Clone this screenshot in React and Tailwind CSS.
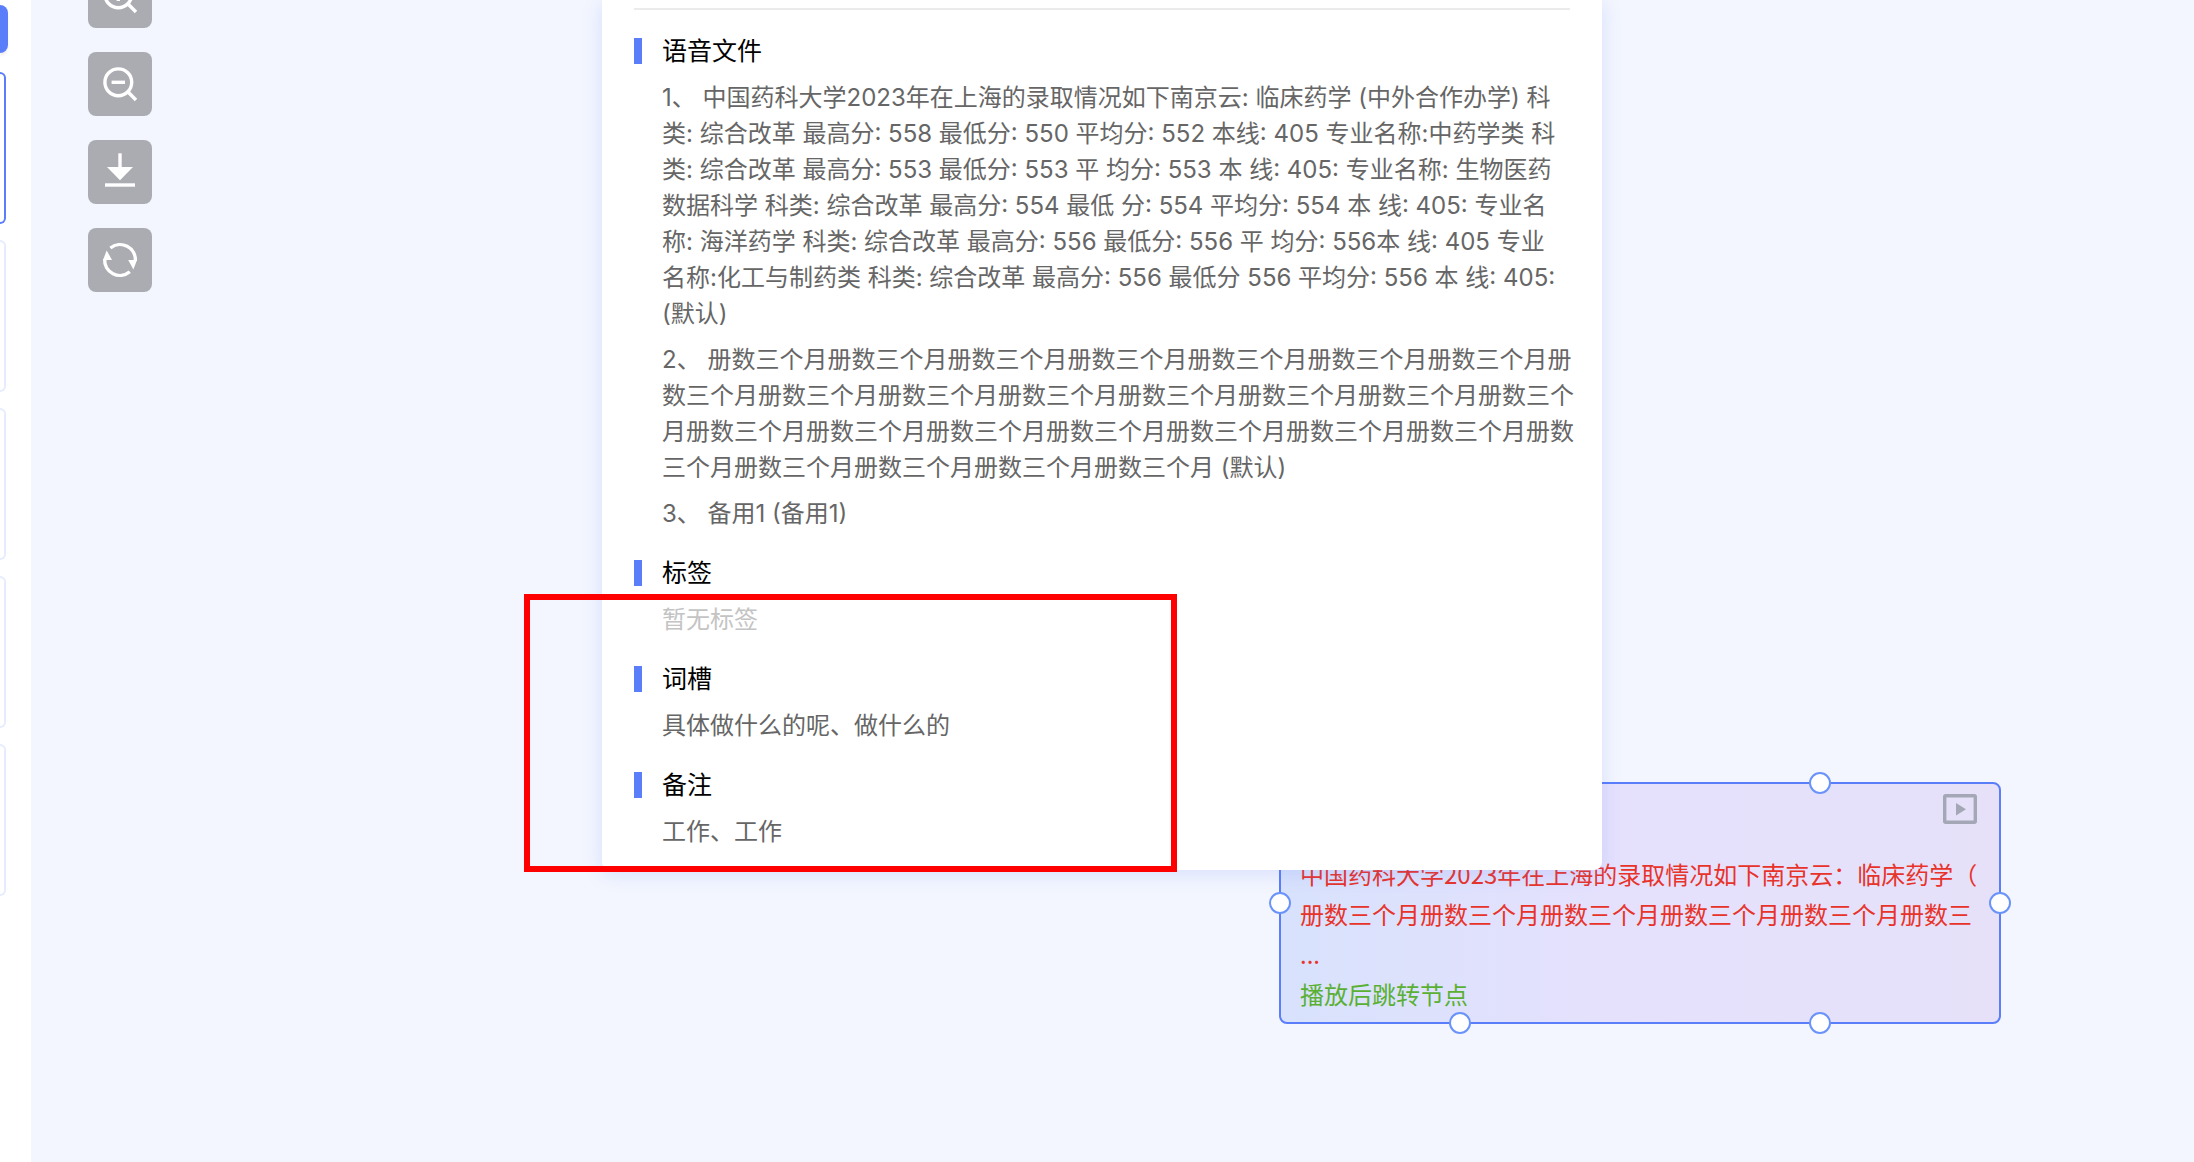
const ITEMS = [
  [
    "1、 中国药科大学2023年在上海的录取情况如下南京云: 临床药学 (中外合作办学) 科",
    "类: 综合改革 最高分: 558 最低分: 550 平均分: 552 本线: 405 专业名称:中药学类 科",
    "类: 综合改革 最高分: 553 最低分: 553 平 均分: 553 本 线: 405: 专业名称: 生物医药",
    "数据科学 科类: 综合改革 最高分: 554 最低 分: 554 平均分: 554 本 线: 405: 专业名",
    "称: 海洋药学 科类: 综合改革 最高分: 556 最低分: 556 平 均分: 556本 线: 405 专业",
    "名称:化工与制药类 科类: 综合改革 最高分: 556 最低分 556 平均分: 556 本 线: 405:",
    "(默认)",
  ],
  [
    "2、 册数三个月册数三个月册数三个月册数三个月册数三个月册数三个月册数三个月册",
    "数三个月册数三个月册数三个月册数三个月册数三个月册数三个月册数三个月册数三个",
    "月册数三个月册数三个月册数三个月册数三个月册数三个月册数三个月册数三个月册数",
    "三个月册数三个月册数三个月册数三个月册数三个月 (默认)",
  ],
  ["3、 备用1 (备用1)"],
];

function ToolButton({ label, children }) {
  return (
    <button type="button" aria-label={label} className="size-16 rounded-lg bg-[#abacb2] text-white">
      <svg viewBox="0 0 64 64" className="size-16" fill="none" stroke="currentColor" strokeWidth="3.4">
        {children}
      </svg>
    </button>
  );
}

function Lens() {
  return (
    <>
      <circle cx="30.3" cy="30.3" r="13.4" />
      <path d="M39.8 39.8L48 48" />
    </>
  );
}

function Toolbar() {
  return (
    <div className="-mt-9 ml-[57px] flex w-16 flex-col gap-6">
      <ToolButton label="放大">
        <Lens />
        <path d="M23.6 30.3H37M30.3 23.6V37" />
      </ToolButton>
      <ToolButton label="缩小">
        <Lens />
        <path d="M23.6 30.3H37" />
      </ToolButton>
      <ToolButton label="下载">
        <path d="M32 13.3V28" />
        <path d="M19 27H45L32 40.3Z" fill="currentColor" stroke="none" />
        <path d="M17 45H47" />
      </ToolButton>
      <ToolButton label="刷新">
        <path d="M22.4 20A15.3 15.3 0 0 1 47.3 33" />
        <path d="M41.8 43.8A15.3 15.3 0 0 1 16.7 31" />
        <path d="M18.7 22.4L24 32H15Z" fill="currentColor" stroke="none" />
        <path d="M45.4 41.6L40.2 32H49Z" fill="currentColor" stroke="none" />
      </ToolButton>
    </div>
  );
}

function Section({ title, children }) {
  return (
    <section className="flex flex-col gap-3">
      <h2 className="flex items-center gap-5 text-[25px] leading-[34px] text-black">
        <span className="h-[26px] w-2 bg-[#5a7dfa]" />
        {title}
      </h2>
      <div className="flex flex-col gap-2.5 pl-7 text-2xl leading-9 text-[#666]">{children}</div>
    </section>
  );
}

function Port({ place }) {
  return <span className={`absolute size-[22px] rounded-full border-2 border-[#6a93fa] bg-white ${place}`} />;
}

function FlowNode() {
  return (
    <article className="absolute top-[782px] left-[1248px] w-[722px] rounded-lg border-2 border-[#5a7dfa] bg-linear-to-r from-[#d8e2fc] via-[#e5e1fd] via-45% to-[#e6e1f9] pr-[22px] pb-2 pl-[19px] font-['Noto_Sans_CJK_SC',sans-serif] text-2xl leading-10 whitespace-nowrap text-[#e8332a]">
      <div className="flex h-[70px] justify-end pt-2.5">
        <svg viewBox="0 0 34 30" className="h-[30px] w-[34px] text-[#a4a8b6]">
          <rect x="1.7" y="1.7" width="30.6" height="26.6" rx="1" fill="none" stroke="currentColor" strokeWidth="3.4" />
          <path d="M13 9V21.5L23 15.2Z" fill="currentColor" />
        </svg>
      </div>
      <p>中国药科大学2023年在上海的录取情况如下南京云：临床药学（</p>
      <p>册数三个月册数三个月册数三个月册数三个月册数三个月册数三</p>
      <p>...</p>
      <p className="text-[#5ab033]">播放后跳转节点</p>
      <Port place="-top-3 left-[168px]" />
      <Port place="-top-3 left-[528px]" />
      <Port place="top-[108px] -left-3" />
      <Port place="top-[108px] -right-3" />
      <Port place="-bottom-3 left-[168px]" />
      <Port place="-bottom-3 left-[528px]" />
    </article>
  );
}

function DetailPanel() {
  return (
    <div className="absolute top-0 left-[571px] flex w-[1000px] flex-col gap-6 rounded-b-lg bg-white px-8 pt-2 pb-5 whitespace-nowrap shadow-[0_4px_20px_rgba(90,122,250,0.18)]">
      <hr className="border-t-2 border-[#ebebeb]" />
      <Section title="语音文件">
        {ITEMS.map((lines) => (
          <p key={lines[0]}>
            {lines.map((line) => (
              <span key={line} className="block">{line}</span>
            ))}
          </p>
        ))}
      </Section>
      <Section title="标签">
        <p className="text-[#c4c4c4]">暂无标签</p>
      </Section>
      <Section title="词槽">
        <p>具体做什么的呢、做什么的</p>
      </Section>
      <Section title="备注">
        <p>工作、工作</p>
      </Section>
    </div>
  );
}

export default function App() {
  return (
    <div className="flex min-h-screen overflow-hidden bg-white font-['Inter','Noto_Sans_CJK_SC',sans-serif]">
      <aside className="flex w-[31px] shrink-0 flex-col items-start gap-4 pt-[5px]">
        <button type="button" aria-label="新建" className="mb-[3px] h-12 w-2 rounded-r-lg bg-[#5a7dfa] shadow-[0_3px_3px_rgba(0,0,0,0.06)]" />
        <div className="h-[152px] w-1.5 rounded-r-lg border-2 border-l-0 border-[#5a7dfa]" />
        <div className="h-[152px] w-1.5 rounded-r-lg border-2 border-l-0 border-[#e6ecfe]" />
        <div className="h-[152px] w-1.5 rounded-r-lg border-2 border-l-0 border-[#e6ecfe]" />
        <div className="h-[152px] w-1.5 rounded-r-lg border-2 border-l-0 border-[#e6ecfe]" />
        <div className="h-[152px] w-1.5 rounded-r-lg border-2 border-l-0 border-[#e6ecfe]" />
      </aside>
      <main className="relative flex-1 overflow-hidden bg-[#f3f6fe]">
        <Toolbar />
        <FlowNode />
        <DetailPanel />
        <div className="absolute top-[594px] left-[493px] h-[278px] w-[653px] border-6 border-[#f00]" />
      </main>
    </div>
  );
}
